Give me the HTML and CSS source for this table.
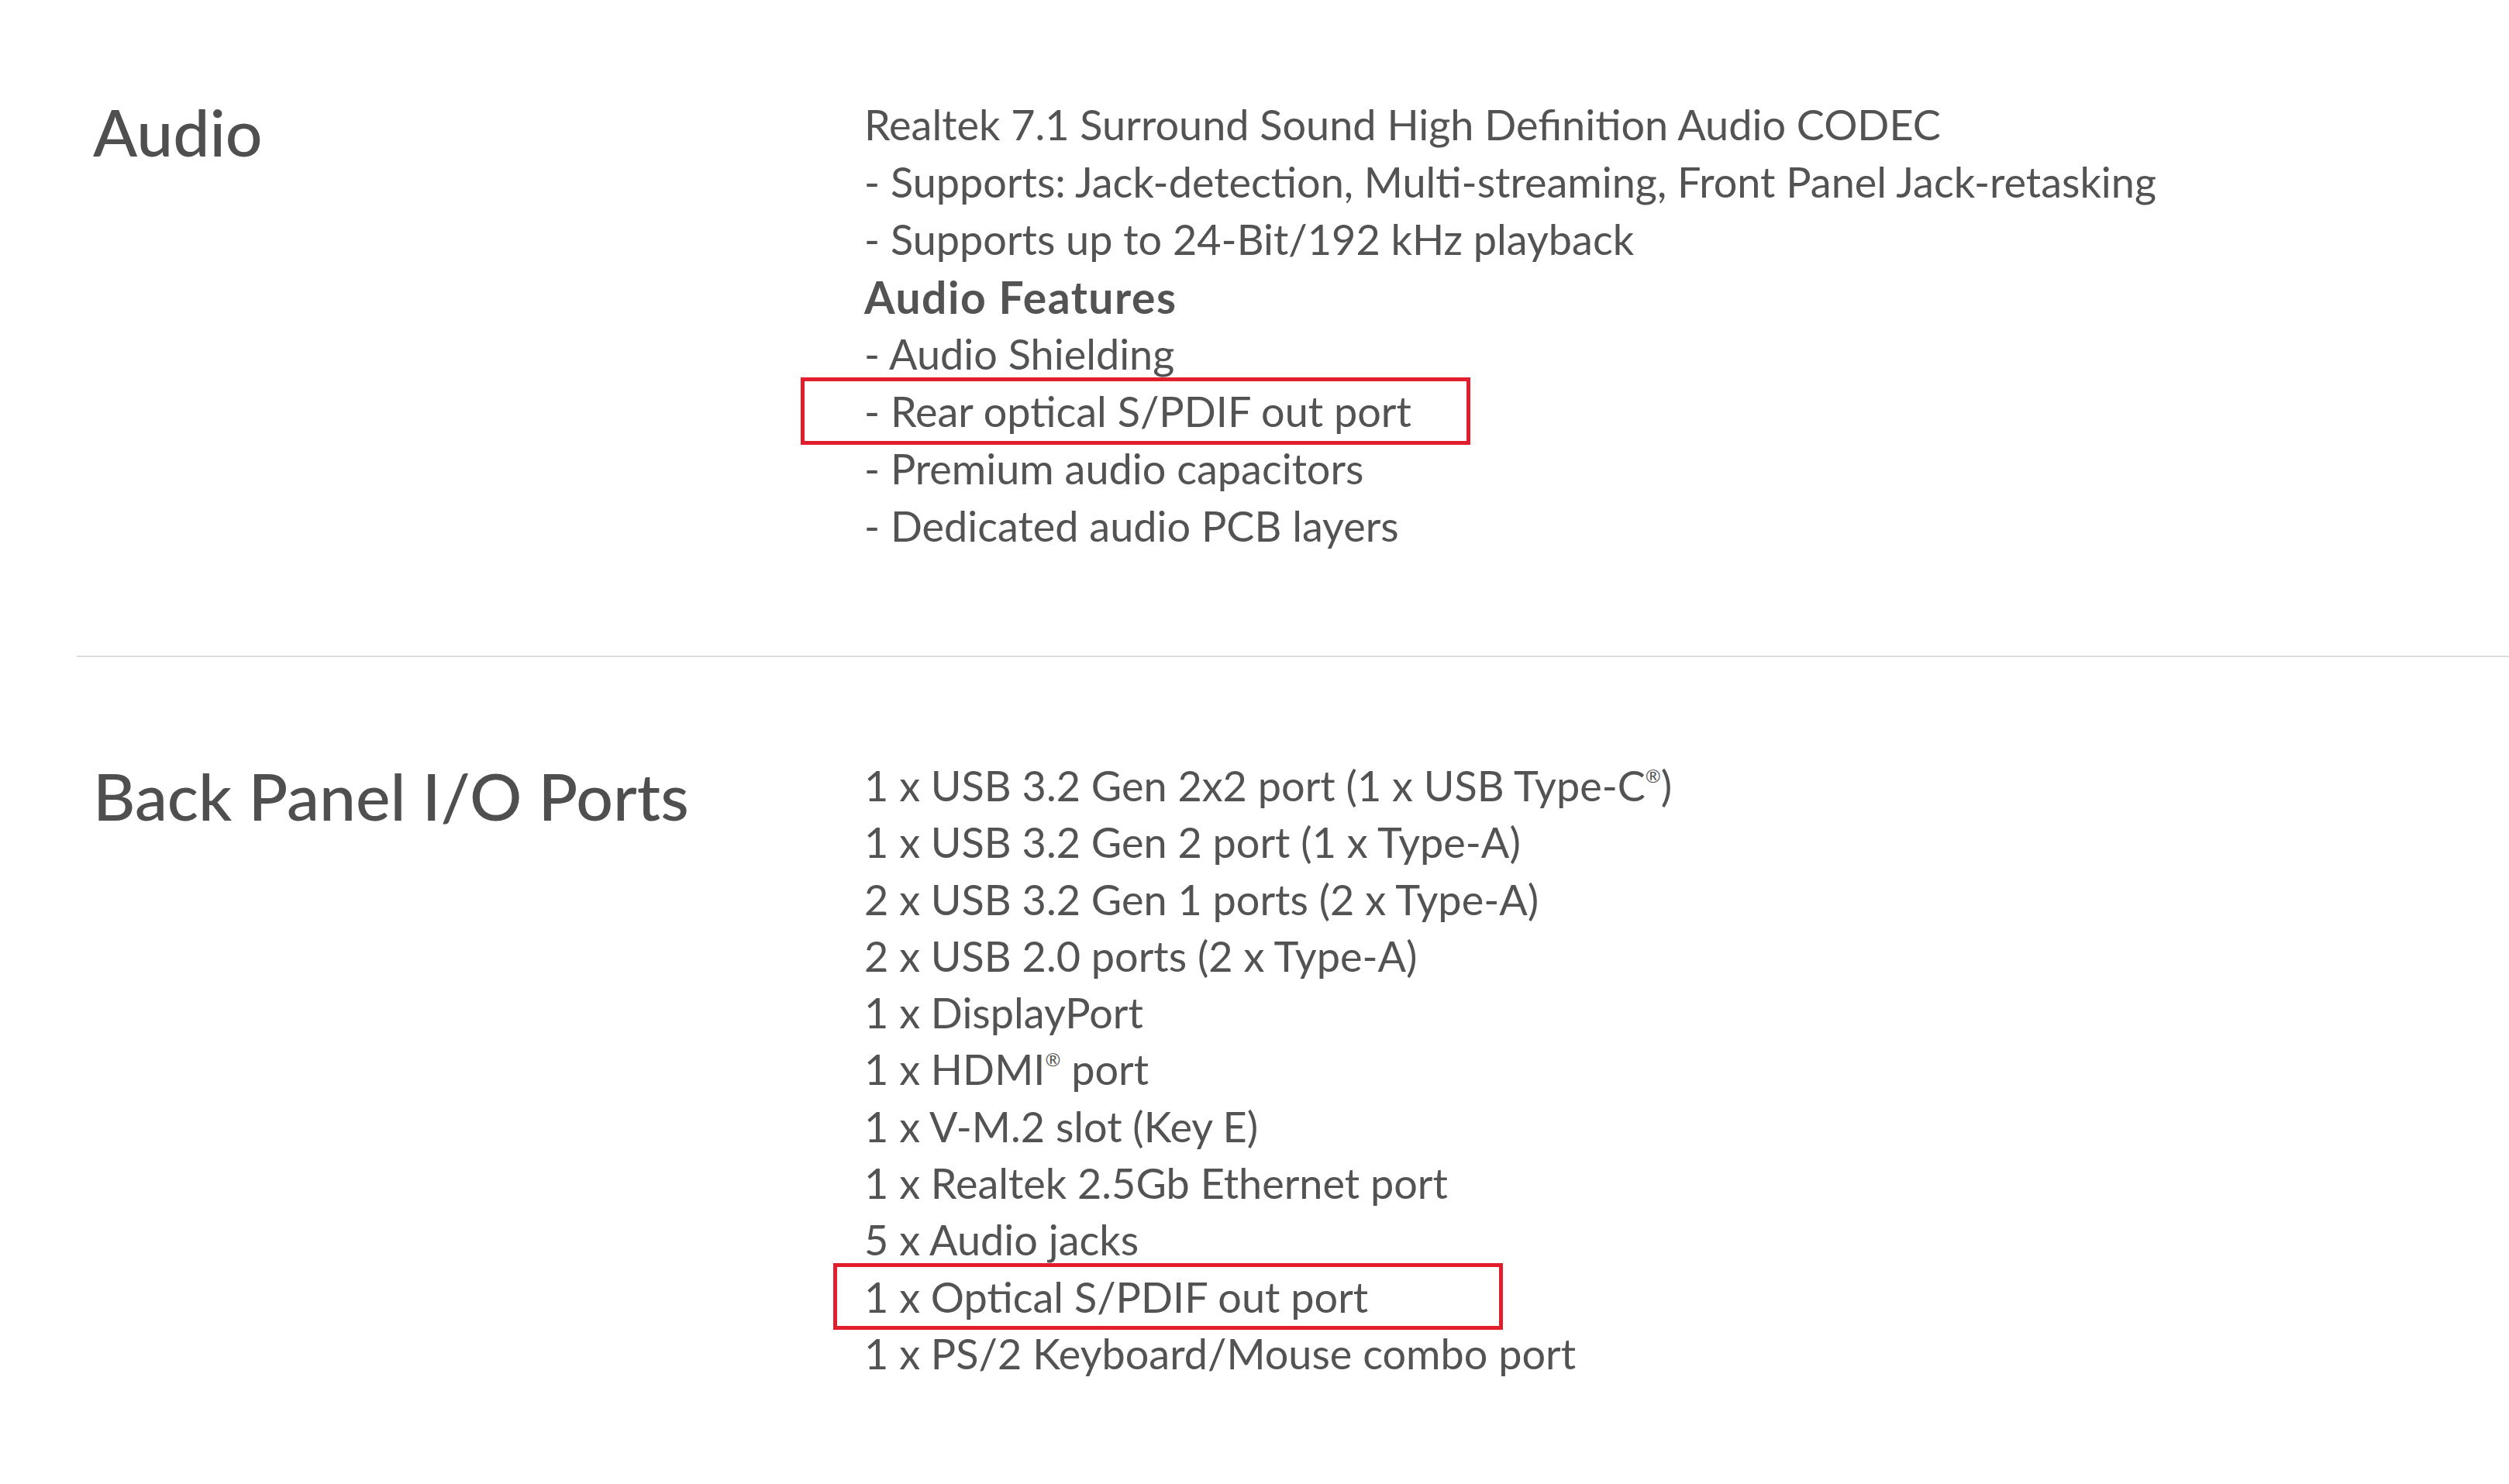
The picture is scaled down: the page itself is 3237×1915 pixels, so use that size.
FILE: index.html
```html
<!DOCTYPE html>
<html lang="en">
<head>
<meta charset="utf-8">
<title>Specifications</title>
<link rel="stylesheet" href="styles.css">
</head>
<body>
<main class="specs">
  <section class="spec-row spec-row--first">
    <h2 class="spec-title">Audio</h2>
    <div class="spec-body">
      <div class="spec-line">Realtek 7.1 Surround Sound High Definition Audio CODEC</div>
      <div class="spec-line">- Supports: Jack-detection, Multi-streaming, Front Panel Jack-retasking</div>
      <div class="spec-line">- Supports up to 24-Bit/192 kHz playback</div>
      <div class="spec-line spec-line--bold">Audio Features</div>
      <div class="spec-line">- Audio Shielding</div>
      <div class="spec-line spec-line--mark spec-line--mark-a">- Rear optical S/PDIF out port</div>
      <div class="spec-line">- Premium audio capacitors</div>
      <div class="spec-line">- Dedicated audio PCB layers</div>
    </div>
  </section>
  <hr class="divider">
  <section class="spec-row spec-row--second">
    <h2 class="spec-title">Back Panel I/O Ports</h2>
    <div class="spec-body spec-body--tight">
      <div class="spec-line">1 x USB 3.2 Gen 2x2 port (1 x USB Type-C<sup class="reg">®</sup>)</div>
      <div class="spec-line">1 x USB 3.2 Gen 2 port (1 x Type-A)</div>
      <div class="spec-line">2 x USB 3.2 Gen 1 ports (2 x Type-A)</div>
      <div class="spec-line">2 x USB 2.0 ports (2 x Type-A)</div>
      <div class="spec-line">1 x DisplayPort</div>
      <div class="spec-line">1 x HDMI<sup class="reg">®</sup> port</div>
      <div class="spec-line">1 x V-M.2 slot (Key E)</div>
      <div class="spec-line">1 x Realtek 2.5Gb Ethernet port</div>
      <div class="spec-line">5 x Audio jacks</div>
      <div class="spec-line spec-line--mark spec-line--mark-b">1 x Optical S/PDIF out port</div>
      <div class="spec-line">1 x PS/2 Keyboard/Mouse combo port</div>
    </div>
  </section>
</main>
</body>
</html>
```

FILE: styles.css
```css
html, body {
  margin: 0;
  padding: 0;
  background: #ffffff;
}

.specs {
  padding-left: 99px;
  color: #4f4f4f;
}

.spec-row {
  display: grid;
  grid-template-columns: 995px 1fr;
  padding: 124px 0 130px 21px;
}

.spec-row--second {
  padding-top: 129px;
}

.spec-title {
  margin: -4px 0 0;
  font-family: "Lato", "Noto Sans", sans-serif;
  font-weight: 500;
  font-size: 84px;
  line-height: 100px;
  color: #4f4f4f;
}

.spec-row--second .spec-title {
  margin-top: 0;
}

.spec-body {
  font-family: "Lato", "Noto Sans", sans-serif;
  font-size: 54px;
  line-height: 74px;
  color: #535353;
}

.spec-body--tight {
  line-height: 73.3px;
}

.spec-line {
  white-space: nowrap;
}

.spec-line--bold {
  font-weight: 700;
  font-size: 57px;
  letter-spacing: 1.5px;
}

.spec-line--mark {
  box-sizing: border-box;
  width: 864px;
  border: 5px solid #e21d2c;
  margin-top: -7px;
  margin-bottom: -6px;
  padding-top: 2px;
  padding-bottom: 1px;
}

.spec-line--mark-a {
  margin-left: -82px;
  padding-left: 77px;
}

.spec-line--mark-b {
  margin-left: -40px;
  padding-left: 35px;
}

.reg {
  font-size: 24px;
  line-height: 0;
  vertical-align: 24px;
}

.divider {
  margin: 0;
  border: 0;
  height: 2px;
  background: #dcdcdc;
}
```
